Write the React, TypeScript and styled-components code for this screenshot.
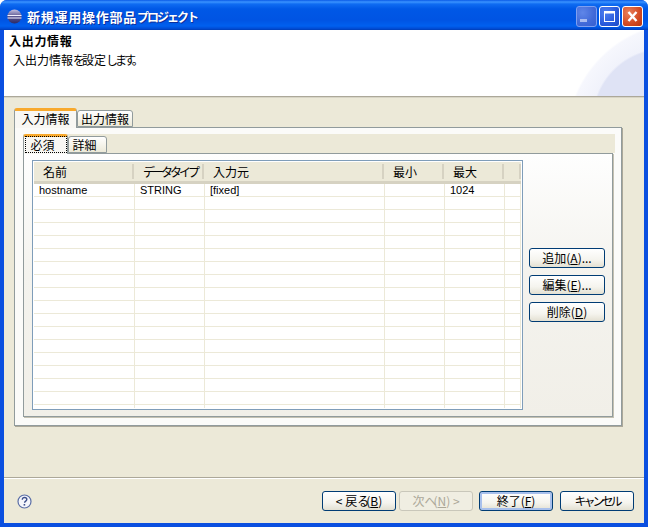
import React from "react";
import styled, { createGlobalStyle } from "styled-components";

const CJK = `"Noto Sans CJK JP", sans-serif`;
const LATIN = `"Liberation Sans", "Noto Sans CJK JP", sans-serif`;

const GlobalStyle = createGlobalStyle`
  html, body {
    margin: 0;
    padding: 0;
    background: #fff;
  }
  * {
    box-sizing: border-box;
  }
`;

const Window = styled.div`
  width: 648px;
  height: 527px;
  display: flex;
  flex-direction: column;
  background: #0a4fe0;
  border-radius: 7px 7px 0 0;
  overflow: hidden;
  font-family: ${CJK};
  font-size: 12px;
  color: #000;
`;

const TitleBar = styled.div`
  height: 30px;
  flex: none;
  display: flex;
  align-items: center;
  padding: 3px 5px 0 7px;
  background: linear-gradient(
    180deg,
    #0a5ae6 0,
    #3a93ff 2px,
    #0f6cf2 4px,
    #0058e6 9px,
    #0054e3 20px,
    #0060ef 26px,
    #0048d0 29px,
    #003cb0 30px
  );
`;

const TitleText = styled.span`
  margin-left: 5px;
  flex: 1;
  font-size: 13px;
  font-weight: 700;
  letter-spacing: 0.75px;
  color: #fff;
  text-shadow: 1px 1px 0 #0a2f9c;
`;

const Kana = styled.span`
  font-size: 12px;
  letter-spacing: -3px;
`;

const TitleKana = styled.span`
  font-size: 12px;
  letter-spacing: -2px;
`;

const CtrlButton = styled.div<{ $kind: "min" | "max" | "close" }>`
  width: 21px;
  height: 21px;
  margin-left: 2px;
  border: 1px solid #fff;
  border-radius: 3px;
  display: flex;
  align-items: center;
  justify-content: center;
  border-color: ${(p) => (p.$kind === "min" ? "#7f9ff0" : "#fff")};
  background: ${(p) =>
    p.$kind === "close"
      ? "radial-gradient(circle at 30% 30%, #e8805c, #d34a22 60%, #b8350f)"
      : p.$kind === "max"
        ? "radial-gradient(circle at 30% 30%, #4f7ff0, #2a5bdc 60%, #1c49c4)"
        : "radial-gradient(circle at 30% 30%, #5f86e8, #4169d8 60%, #365fd0)"};
`;

const Body = styled.div`
  flex: 1;
  min-height: 0;
  margin: 0 4px 4px;
  display: flex;
  flex-direction: column;
  background: #ece9d8;
`;

const Banner = styled.div`
  height: 67px;
  flex: none;
  padding: 3px 5px;
  background:
    radial-gradient(circle 72px at 660px 90px, #dfe3f5 0, #dfe3f5 70px, rgba(223, 227, 245, 0) 72px),
    radial-gradient(circle 118px at 680px 110px, #e6e9f7 0, #e8ebf8 72px, #f6f7fd 116px, rgba(255, 255, 255, 0) 118px),
    #fff;
  border-bottom: 1px solid #aca899;
  box-shadow: 0 1px 0 #d8d5c6;
  line-height: 16px;
`;

const BannerTitle = styled.div`
  font-weight: 700;
  font-size: 12px;
  letter-spacing: 0.7px;
`;

const BannerText = styled.div`
  margin-left: 4px;
  margin-top: 3px;
`;

const Main = styled.div`
  flex: 1;
  min-height: 0;
  padding: 11px 0 0 10px;
  display: flex;
  flex-direction: column;
`;

const TabRow = styled.div<{ $fill?: boolean }>`
  display: flex;
  align-items: flex-end;
  position: relative;
  z-index: 1;
  flex: none;
  width: ${(p) => (p.$fill ? "592px" : "auto")};
  background: ${(p) => (p.$fill ? "#ece9d8" : "transparent")};
`;

const Tab = styled.div<{ $active?: boolean; $w: number; $pr?: number }>`
  width: ${(p) => p.$w}px;
  height: ${(p) => (p.$active ? 20 : 17)}px;
  padding: 0 ${(p) => p.$pr ?? 0}px ${(p) => (p.$active ? 2 : 0)}px 0;
  display: flex;
  align-items: center;
  justify-content: center;
  line-height: 14px;
  border: 1px solid #919b9c;
  border-radius: 3px 3px 0 0;
  background: ${(p) => (p.$active ? "#f8f7f3" : "linear-gradient(180deg, #fff, #ece9d8)")};
  border-bottom: ${(p) => (p.$active ? "none" : "1px solid #919b9c")};
  border-top: ${(p) => (p.$active ? "3px solid #f8a92c" : "1px solid #919b9c")};
  margin-bottom: ${(p) => (p.$active ? "-1px" : "0")};
`;

const FocusLabel = styled.span`
  outline: 1px dotted #000;
  width: 40px;
  height: 15px;
  padding-left: 5px;
  display: flex;
  align-items: center;
`;

const OuterPanel = styled.div`
  width: 608px;
  height: 299px;
  flex: none;
  padding: 6px 0 8px 8px;
  display: flex;
  flex-direction: column;
  border: 1px solid #919b9c;
  background: #fbfbf9;
  box-shadow: 1px 1px 0 #aca899;
`;

const InnerPanel = styled.div`
  width: 590px;
  height: 264px;
  flex: none;
  display: flex;
  padding: 6px 8px;
  border: 1px solid #919b9c;
  background: linear-gradient(180deg, #fefefe 0, #f4f3ee 120px, #f1efe8 100%);
  box-shadow: 1px 1px 0 #c4c1b2;
`;

const Table = styled.div`
  width: 491px;
  height: 250px;
  flex: none;
  padding: 1px 1px 0 1px;
  background: #fff;
  border: 1px solid #7f9db9;
  overflow: hidden;
`;

const HeaderRow = styled.div`
  display: flex;
  height: 22px;
  background: #ece9d8;
  border-bottom: 3px solid #d6d2c2;
`;

const HeadCell = styled.div<{ $w: number }>`
  width: ${(p) => p.$w}px;
  height: 15px;
  margin-top: 2px;
  flex: none;
  padding-left: 9px;
  line-height: 15px;
  white-space: nowrap;
  border-right: 2px solid #d6d2c2;
`;

const Row = styled.div<{ $tail?: boolean }>`
  display: flex;
  height: ${(p) => (p.$tail ? 3 : 13)}px;
  border-bottom: ${(p) => (p.$tail ? "none" : "1px solid #ece9d8")};
`;

const Cell = styled.div<{ $w: number }>`
  width: ${(p) => p.$w}px;
  flex: none;
  padding-left: 5px;
  font-family: ${LATIN};
  font-size: 11px;
  line-height: 12px;
  border-right: 1px solid #ece9d8;
  overflow: hidden;
`;

const SideButtons = styled.div`
  margin-left: 6px;
  padding-top: 88px;
  display: flex;
  flex-direction: column;
  gap: 7px;
`;

const Button = styled.div<{ $ml?: number; $disabled?: boolean; $default?: boolean }>`
  width: ${(p) => (p.$ml === undefined && !p.$default ? 76 : 74)}px;
  height: 20px;
  margin-left: ${(p) => p.$ml ?? 0}px;
  display: flex;
  align-items: center;
  justify-content: center;
  border: 1px solid ${(p) => (p.$disabled ? "#c9c7ba" : "#003c74")};
  border-radius: 3px;
  color: ${(p) => (p.$disabled ? "#aca899" : "#000")};
  background: ${(p) => (p.$disabled ? "#f0eee2" : "linear-gradient(180deg, #fff 0, #f5f4ee 60%, #e3e0d2 100%)")};
  box-shadow: ${(p) => (p.$default ? "inset 0 0 0 2px #a8c0ec" : "none")};
  font-size: 12px;
  line-height: 14px;
  white-space: nowrap;
  u {
    text-underline-offset: 1px;
  }
`;

const Footer = styled.div`
  height: 46px;
  flex: none;
  margin-top: auto;
  display: flex;
  align-items: center;
  padding: 1px 10px 0 13px;
  border-top: 1px solid #aca899;
  box-shadow: inset 0 1px 0 #fff;
`;

const FooterSpacer = styled.div`
  flex: 1;
`;

const columns = [101, 70, 180, 60, 60, 16];
const headColumns = [100, 70, 180, 60, 60, 17];
const firstRow = ["hostname", "STRING", "[fixed]", "", "1024", ""];
const rowCount = 17;

const EclipseIcon = () => (
  <svg width="15" height="15" viewBox="0 0 15 15">
    <defs>
      <linearGradient id="ball" x1="0" y1="0" x2="0" y2="1">
        <stop offset="0" stopColor="#c4c0e0" />
        <stop offset="0.5" stopColor="#5a558f" />
        <stop offset="1" stopColor="#2c2a66" />
      </linearGradient>
    </defs>
    <circle cx="7.5" cy="7.5" r="7" fill="url(#ball)" />
    <path d="M0.5 6.5h14M0.5 9h14" stroke="#f2f0ff" strokeWidth="1" />
  </svg>
);

const MinGlyph = () => (
  <svg width="13" height="13" viewBox="0 0 13 13">
    <rect x="0" y="9" width="7" height="3" fill="#a9bcf0" />
  </svg>
);

const MaxGlyph = () => (
  <svg width="13" height="13" viewBox="0 0 13 13">
    <rect x="1.5" y="2" width="10" height="9.5" fill="none" stroke="#fff" />
    <rect x="1" y="1" width="11" height="2.5" fill="#fff" />
  </svg>
);

const CloseGlyph = () => (
  <svg width="13" height="13" viewBox="0 0 13 13">
    <path d="M2.5 2l8 9M10.5 2l-8 9" stroke="#fff" strokeWidth="2.4" />
  </svg>
);

const HelpIcon = () => (
  <svg width="15" height="15" viewBox="0 0 15 15">
    <circle cx="7.5" cy="7.5" r="6.5" fill="#f4f5fb" stroke="#5a6ea6" strokeWidth="1.2" />
    <path
      d="M5.3 5.7c0-1.4 1-2.2 2.2-2.2s2.3.8 2.3 2c0 1.6-2.2 1.7-2.2 3.3"
      fill="none"
      stroke="#3c4f8c"
      strokeWidth="1.4"
    />
    <rect x="6.6" y="10" width="1.6" height="1.6" fill="#3c4f8c" />
  </svg>
);

const App = () => {
  return (
    <Window>
      <GlobalStyle />
      <TitleBar>
        <EclipseIcon />
        <TitleText>
          新規運用操作部品<TitleKana>プロジェクト</TitleKana>
        </TitleText>
        <CtrlButton $kind="min">
          <MinGlyph />
        </CtrlButton>
        <CtrlButton $kind="max">
          <MaxGlyph />
        </CtrlButton>
        <CtrlButton $kind="close">
          <CloseGlyph />
        </CtrlButton>
      </TitleBar>
      <Body>
        <Banner>
          <BannerTitle>入出力情報</BannerTitle>
          <BannerText>
            入出力情報<Kana>を</Kana>設定<Kana>します。</Kana>
          </BannerText>
        </Banner>
        <Main>
          <TabRow>
            <Tab $active $w={63}>
              入力情報
            </Tab>
            <Tab $w={56}>出力情報</Tab>
          </TabRow>
          <OuterPanel>
            <TabRow $fill>
              <Tab $active $w={45}>
                <FocusLabel>必須</FocusLabel>
              </Tab>
              <Tab $w={39} $pr={6}>
                詳細
              </Tab>
            </TabRow>
            <InnerPanel>
              <Table>
                <HeaderRow>
                  <HeadCell $w={headColumns[0]}>名前</HeadCell>
                  <HeadCell $w={headColumns[1]}>
                    <Kana>データタイプ</Kana>
                  </HeadCell>
                  <HeadCell $w={headColumns[2]}>入力元</HeadCell>
                  <HeadCell $w={headColumns[3]}>最小</HeadCell>
                  <HeadCell $w={headColumns[4]}>最大</HeadCell>
                  <HeadCell $w={headColumns[5]} />
                </HeaderRow>
                {Array.from({ length: rowCount + 1 }).map((_, r) => (
                  <Row key={r} $tail={r === rowCount}>
                    {columns.map((w, i) => (
                      <Cell key={i} $w={w}>
                        {r === 0 ? firstRow[i] : ""}
                      </Cell>
                    ))}
                  </Row>
                ))}
              </Table>
              <SideButtons>
                <Button>
                  追加(<u>A</u>)...
                </Button>
                <Button>
                  編集(<u>E</u>)...
                </Button>
                <Button>
                  削除(<u>D</u>)
                </Button>
              </SideButtons>
            </InnerPanel>
          </OuterPanel>
        </Main>
        <Footer>
          <HelpIcon />
          <FooterSpacer />
          <Button $ml={0}>
            &lt; 戻<Kana>る</Kana>(<u>B</u>)
          </Button>
          <Button $ml={3} $disabled>
            次<Kana>へ</Kana>(<u>N</u>) &gt;
          </Button>
          <Button $ml={6} $default>
            終了(<u>F</u>)
          </Button>
          <Button $ml={7}>
            <Kana>キャンセル</Kana>
          </Button>
        </Footer>
      </Body>
    </Window>
  );
};

export default App;
